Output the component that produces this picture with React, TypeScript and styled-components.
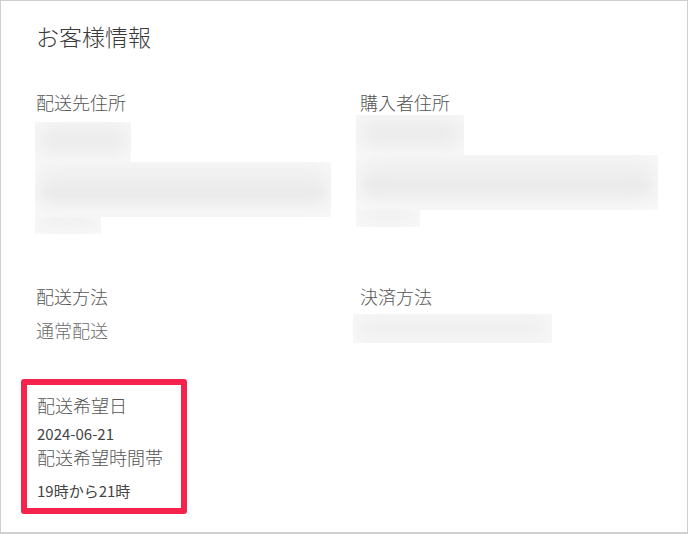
import React from 'react';
import styled, { createGlobalStyle } from 'styled-components';

const GlobalStyle = createGlobalStyle`
  body {
    margin: 0;
    background: #ffffff;
    font-family: "Noto Sans CJK JP", "Noto Sans", sans-serif;
  }
`;

const Frame = styled.div`
  box-sizing: border-box;
  width: 688px;
  height: 534px;
  border: 1px solid #cfcfcf;
  border-bottom-width: 2px;
  padding: 20px 0 0 35px;
  background: #ffffff;
  overflow: hidden;
`;

const Title = styled.h1`
  margin: 0;
  font-size: 23px;
  line-height: 30px;
  font-weight: 300;
  color: #3a3a3a;
`;

const Grid = styled.div`
  display: grid;
  grid-template-columns: 324px 1fr;
  row-gap: 49px;
  margin-top: 38px;
`;

const Field = styled.div`
  display: flex;
  flex-direction: column;
  align-items: flex-start;
`;

const Label = styled.div`
  font-size: 18px;
  line-height: 26px;
  font-weight: 300;
  color: #555555;
  white-space: nowrap;
`;

const Value = styled.div`
  margin-top: 8px;
  font-size: 18px;
  line-height: 26px;
  font-weight: 300;
  color: #6a6a6a;
`;

const Redacted = styled.div<{ $top: number; $left: number }>`
  display: flex;
  flex-direction: column;
  margin-top: ${(p) => p.$top}px;
  margin-left: ${(p) => p.$left}px;
`;

const BlurLine = styled.div<{ $w: number; $h: number }>`
  position: relative;
  width: ${(p) => p.$w}px;
  height: ${(p) => p.$h}px;
  overflow: hidden;
  background: #f8f8f8;
`;

const Smudge = styled.div<{ $shade: string; $y: number; $size: number }>`
  position: absolute;
  left: 4px;
  right: 4px;
  top: ${(p) => p.$y}px;
  height: ${(p) => p.$size}px;
  background: ${(p) => p.$shade};
  border-radius: 8px;
  filter: blur(9px);
`;

const Highlight = styled.div`
  box-sizing: border-box;
  width: 166px;
  height: 135px;
  margin: 36px 0 0 -15px;
  border: 6px solid #f5224b;
  border-radius: 3px;
  padding: 7px 0 0 10px;
`;

const Small = styled.div<{ $gap: number }>`
  margin-top: ${(p) => p.$gap}px;
  font-size: 15px;
  line-height: 20px;
  color: #444444;
  white-space: nowrap;
`;

const Address = ({ top, left, first, wide, last }: { top: number; left: number; first: number; wide: number; last: number }) => (
  <Redacted $top={top} $left={left}>
    <BlurLine $w={first} $h={40}>
      <Smudge $shade="#ebebeb" $y={4} $size={28} />
    </BlurLine>
    <BlurLine $w={wide} $h={55}>
      <Smudge $shade="#f0f0f0" $y={4} $size={18} />
      <Smudge $shade="#e8e8e8" $y={20} $size={22} />
    </BlurLine>
    <BlurLine $w={last} $h={17}>
      <Smudge $shade="#efefef" $y={-4} $size={16} />
    </BlurLine>
  </Redacted>
);

export default function App() {
  return (
    <>
      <GlobalStyle />
      <Frame>
        <Title>お客様情報</Title>
        <Grid>
          <Field>
            <Label>配送先住所</Label>
            <Address top={7} left={-1} first={96} wide={296} last={66} />
          </Field>
          <Field>
            <Label>購入者住所</Label>
            <Address top={0} left={-4} first={108} wide={302} last={64} />
          </Field>
          <Field>
            <Label>配送方法</Label>
            <Value>通常配送</Value>
          </Field>
          <Field>
            <Label>決済方法</Label>
            <Redacted $top={5} $left={-7}>
              <BlurLine $w={199} $h={29}>
                <Smudge $shade="#eeeeee" $y={4} $size={20} />
              </BlurLine>
            </Redacted>
          </Field>
        </Grid>
        <Highlight>
          <Label>配送希望日</Label>
          <Small $gap={6}>2024-06-21</Small>
          <Label>配送希望時間帯</Label>
          <Small $gap={11}>19時から21時</Small>
        </Highlight>
      </Frame>
    </>
  );
}
